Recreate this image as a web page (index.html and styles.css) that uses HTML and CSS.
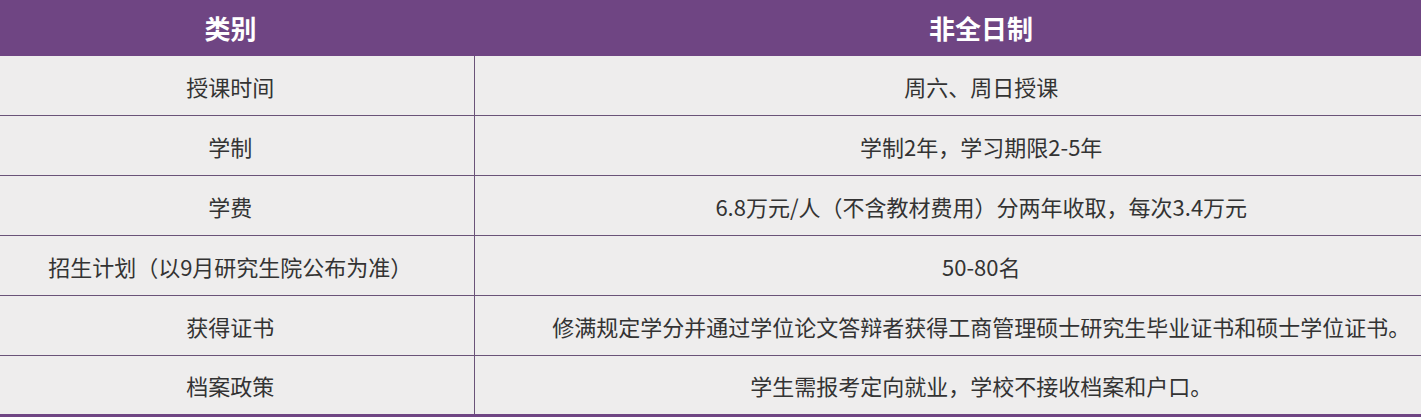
FILE: index.html
```html
<!DOCTYPE html>
<html lang="zh-CN">
<head>
<meta charset="utf-8">
<title>非全日制</title>
<link rel="stylesheet" href="styles.css">
</head>
<body>
<table class="info">
  <thead>
    <tr>
      <th class="c-left">类别</th>
      <th class="c-right">非全日制</th>
    </tr>
  </thead>
  <tbody>
    <tr><td class="c-left">授课时间</td><td class="c-right">周六、周日授课</td></tr>
    <tr><td class="c-left">学制</td><td class="c-right">学制2年，学习期限2-5年</td></tr>
    <tr><td class="c-left">学费</td><td class="c-right">6.8万元/人（不含教材费用）分两年收取，每次3.4万元</td></tr>
    <tr><td class="c-left">招生计划（以9月研究生院公布为准）</td><td class="c-right">50-80名</td></tr>
    <tr><td class="c-left">获得证书</td><td class="c-right">修满规定学分并通过学位论文答辩者获得工商管理硕士研究生毕业证书和硕士学位证书。</td></tr>
    <tr class="last"><td class="c-left">档案政策</td><td class="c-right">学生需报考定向就业，学校不接收档案和户口。</td></tr>
  </tbody>
</table>
</body>
</html>
```

FILE: styles.css
```css
html, body {
  margin: 0;
  padding: 0;
  background: #ffffff;
}
body {
  font-family: "Noto Sans CJK SC", "Microsoft YaHei", "Noto Sans", sans-serif;
  color: #333333;
}
.info {
  width: 1421px;
  border-collapse: collapse;
  table-layout: fixed;
  background: #eeeded;
}
.info th {
  background: #6f4583;
  color: #ffffff;
  font-size: 26px;
  font-weight: 700;
  height: 56px;
  padding: 0;
  text-align: center;
  vertical-align: middle;
  line-height: 1;
}
.info td {
  font-size: 22px;
  height: 59px;
  padding: 0;
  text-align: center;
  vertical-align: middle;
  line-height: 1;
  border-bottom: 1px solid #6a5378;
  white-space: nowrap;
}
.info .c-left {
  width: 461px;
  padding-right: 13px;
}
.info td.c-left {
  border-right: 1px solid #6a5378;
}
.info .c-right {
  padding-left: 67px;
}
.info tr.last td {
  height: 58px;
  border-bottom: 3px solid #6f4583;
}
```
